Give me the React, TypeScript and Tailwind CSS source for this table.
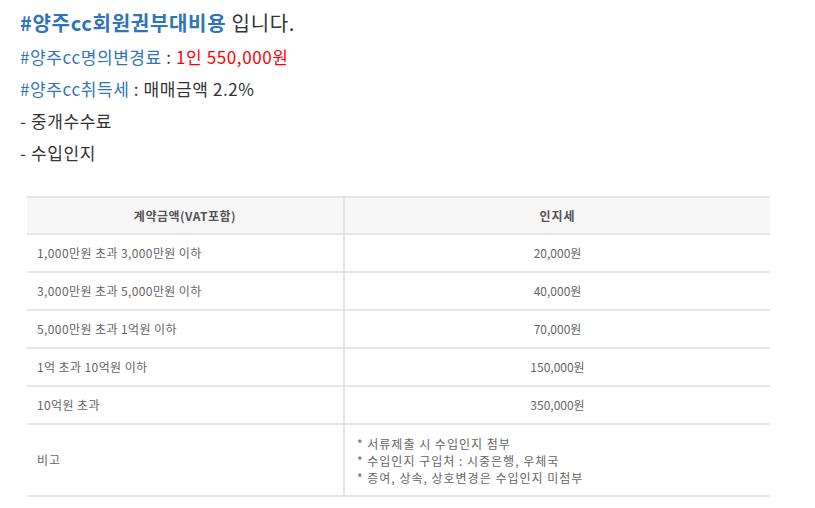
const rows = [
  { range: "1,000만원 초과 3,000만원 이하", tax: "20,000원" },
  { range: "3,000만원 초과 5,000만원 이하", tax: "40,000원" },
  { range: "5,000만원 초과 1억원 이하", tax: "70,000원" },
  { range: "1억 초과 10억원 이하", tax: "150,000원" },
  { range: "10억원 초과", tax: "350,000원" },
]

const notes = [
  "* 서류제출 시 수입인지 첨부",
  "* 수입인지 구입처 : 시중은행, 우체국",
  "* 증여, 상속, 상호변경은 수입인지 미첨부",
]

export default function App() {
  return (
    <div className="min-h-[508px] bg-white pl-5 pt-[7px] font-['Noto_Sans_CJK_KR','Noto_Sans',sans-serif] text-[#333]">
      <h1 className="text-[20px] font-bold leading-[32px] tracking-[0.7px]">
        <span className="text-[#2f75b8]">#양주cc회원권부대비용</span>{" "}
        <span className="font-normal">입니다.</span>
      </h1>
      <div className="mt-[2px] text-[17px] leading-[32px] tracking-[0.6px]">
        <p>
          <span className="text-[#2f75b8]">#양주cc명의변경료</span> : <span className="text-[#ff0000]">1인 550,000원</span>
        </p>
        <p>
          <span className="text-[#2f75b8]">#양주cc취득세</span> : 매매금액 2.2%
        </p>
        <p>- 중개수수료</p>
        <p>- 수입인지</p>
      </div>

      <table className="mt-[27px] ml-[7px] w-[743px] border-collapse text-[12px] text-[#666]">
        <thead>
          <tr className="h-[37px] border-t-2 border-b-2 border-[#e6e6e6] bg-[#f7f7f7]">
            <th className="w-[317px] border-r-2 border-[#e6e6e6] font-bold tracking-[0.5px] text-[#555]">계약금액(VAT포함)</th>
            <th className="font-bold tracking-[1px] text-[#555]">인지세</th>
          </tr>
        </thead>
        <tbody>
          {rows.map((r) => (
            <tr key={r.range} className="h-[38px] border-b-2 border-[#e6e6e6]">
              <td className="border-r-2 border-[#e6e6e6] pl-[10px] tracking-[0.4px]">{r.range}</td>
              <td className="text-center">{r.tax}</td>
            </tr>
          ))}
          <tr className="h-[72px] border-b-2 border-[#e6e6e6]">
            <td className="border-r-2 border-[#e6e6e6] pl-[10px] tracking-[1px]">비고</td>
            <td className="pl-[12px] leading-[17px] tracking-[1px]">
              {notes.map((n) => (
                <div key={n}>{n}</div>
              ))}
            </td>
          </tr>
        </tbody>
      </table>
    </div>
  )
}
